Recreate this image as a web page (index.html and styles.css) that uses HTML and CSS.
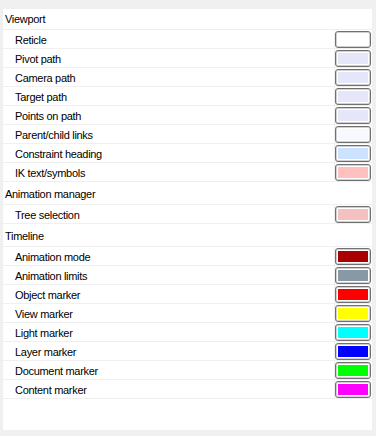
FILE: index.html
```html
<!DOCTYPE html>
<html lang="en">
<head>
    <meta charset="UTF-8">
    <title>Colors</title>
    <link rel="stylesheet" href="styles.css">
</head>
<body>
    <div class="panel">
        <div class="group first">Viewport</div>
        <div class="row"><span class="name">Reticle</span><span class="cell"><span class="swatch"><i style="background:#ffffff"></i></span></span></div>
        <div class="row"><span class="name">Pivot path</span><span class="cell"><span class="swatch"><i style="background:#e6e6fa"></i></span></span></div>
        <div class="row"><span class="name">Camera path</span><span class="cell"><span class="swatch"><i style="background:#e6e6fa"></i></span></span></div>
        <div class="row"><span class="name">Target path</span><span class="cell"><span class="swatch"><i style="background:#e6e6fa"></i></span></span></div>
        <div class="row"><span class="name">Points on path</span><span class="cell"><span class="swatch"><i style="background:#e6e6fa"></i></span></span></div>
        <div class="row"><span class="name">Parent/child links</span><span class="cell"><span class="swatch"><i style="background:#f8f8ff"></i></span></span></div>
        <div class="row"><span class="name">Constraint heading</span><span class="cell"><span class="swatch"><i style="background:#cce2ff"></i></span></span></div>
        <div class="row"><span class="name">IK text/symbols</span><span class="cell"><span class="swatch"><i style="background:#ffc0c0"></i></span></span></div>

        <div class="group">Animation manager</div>
        <div class="row"><span class="name">Tree selection</span><span class="cell"><span class="swatch"><i style="background:#f5c0c0"></i></span></span></div>

        <div class="group">Timeline</div>
        <div class="row"><span class="name">Animation mode</span><span class="cell"><span class="swatch"><i style="background:#aa0000"></i></span></span></div>
        <div class="row"><span class="name">Animation limits</span><span class="cell"><span class="swatch"><i style="background:#8899a6"></i></span></span></div>
        <div class="row"><span class="name">Object marker</span><span class="cell"><span class="swatch"><i style="background:#ff0000"></i></span></span></div>
        <div class="row"><span class="name">View marker</span><span class="cell"><span class="swatch"><i style="background:#ffff00"></i></span></span></div>
        <div class="row"><span class="name">Light marker</span><span class="cell"><span class="swatch"><i style="background:#00ffff"></i></span></span></div>
        <div class="row"><span class="name">Layer marker</span><span class="cell"><span class="swatch"><i style="background:#0000ff"></i></span></span></div>
        <div class="row"><span class="name">Document marker</span><span class="cell"><span class="swatch"><i style="background:#00ff00"></i></span></span></div>
        <div class="row"><span class="name">Content marker</span><span class="cell"><span class="swatch"><i style="background:#ff00ff"></i></span></span></div>
    </div>
</body>
</html>
```
FILE: styles.css
```css
body {
    margin: 0;
    padding: 9px 0 0 3px;
    background-color: #f0f0f0;
    font-family: "Liberation Sans", Arial, sans-serif;
    font-size: 11px;
    letter-spacing: -0.3px;
    color: #000;
}
.panel {
    width: 369px;
    height: 421px;
    background-color: #fff;
}
.group {
    box-sizing: border-box;
    height: 23px;
    padding: 2px 0 0 2px;
    line-height: 20px;
    border-bottom: 1px solid #f0f0f0;
}
.group.first {
    height: 21px;
    padding-top: 1px;
    line-height: 19px;
}
.row {
    display: flex;
    height: 18px;
    border-bottom: 1px solid #f0f0f0;
}
.name {
    flex: 1;
    box-sizing: border-box;
    height: 18px;
    padding: 2px 0 0 12px;
    line-height: 17px;
    border-right: 1px solid #f0f0f0;
}
.cell {
    width: 37px;
    padding-top: 1px;
}
.swatch {
    display: block;
    width: 30px;
    height: 11px;
    padding: 2px;
    border: 1px solid #707070;
    border-radius: 3px;
    box-shadow: inset 0 0 0 1px #d0d0d0;
    background: #fff;
}
.swatch i {
    display: block;
    height: 11px;
}
```
